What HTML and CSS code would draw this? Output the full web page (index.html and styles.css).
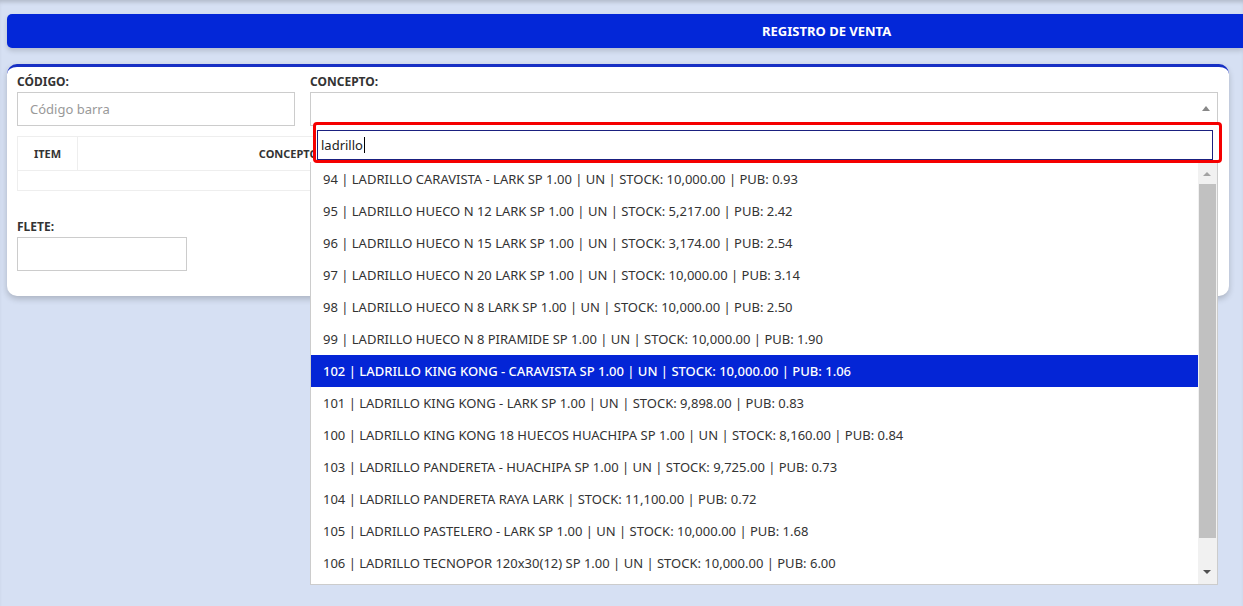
FILE: index.html
```html
<!DOCTYPE html>
<html lang="es">
<head>
    <meta charset="UTF-8">
    <meta name="viewport" content="width=device-width, initial-scale=1.0">
    <title>Registro de venta</title>
    <link rel="stylesheet" href="styles.css">
</head>
<body>

<div class="page">

    <!-- Title bar -->
    <div class="title-bar">REGISTRO DE VENTA</div>

    <!-- Main card -->
    <div class="card">
        <div class="top-row">
            <div class="field field-codigo">
                <label>CÓDIGO:</label>
                <input type="text" class="text-input" placeholder="Código barra">
            </div>
            <div class="field field-concepto">
                <label>CONCEPTO:</label>
                <div class="select-box"><span class="select-arrow"></span></div>

                <!-- Open dropdown of the select -->
                <div class="dropdown">
                    <div class="search-focus">
                        <div class="search-input">ladrillo<span class="caret"></span></div>
                    </div>
                    <div class="results">
                        <ul class="options">
                            <li>94 | LADRILLO CARAVISTA - LARK SP 1.00 | UN | STOCK: 10,000.00 | PUB: 0.93</li>
                            <li>95 | LADRILLO HUECO N 12 LARK SP 1.00 | UN | STOCK: 5,217.00 | PUB: 2.42</li>
                            <li>96 | LADRILLO HUECO N 15 LARK SP 1.00 | UN | STOCK: 3,174.00 | PUB: 2.54</li>
                            <li>97 | LADRILLO HUECO N 20 LARK SP 1.00 | UN | STOCK: 10,000.00 | PUB: 3.14</li>
                            <li>98 | LADRILLO HUECO N 8 LARK SP 1.00 | UN | STOCK: 10,000.00 | PUB: 2.50</li>
                            <li>99 | LADRILLO HUECO N 8 PIRAMIDE SP 1.00 | UN | STOCK: 10,000.00 | PUB: 1.90</li>
                            <li class="selected">102 | LADRILLO KING KONG - CARAVISTA SP 1.00 | UN | STOCK: 10,000.00 | PUB: 1.06</li>
                            <li>101 | LADRILLO KING KONG - LARK SP 1.00 | UN | STOCK: 9,898.00 | PUB: 0.83</li>
                            <li>100 | LADRILLO KING KONG 18 HUECOS HUACHIPA SP 1.00 | UN | STOCK: 8,160.00 | PUB: 0.84</li>
                            <li>103 | LADRILLO PANDERETA - HUACHIPA SP 1.00 | UN | STOCK: 9,725.00 | PUB: 0.73</li>
                            <li>104 | LADRILLO PANDERETA RAYA LARK | STOCK: 11,100.00 | PUB: 0.72</li>
                            <li>105 | LADRILLO PASTELERO - LARK SP 1.00 | UN | STOCK: 10,000.00 | PUB: 1.68</li>
                            <li>106 | LADRILLO TECNOPOR 120x30(12) SP 1.00 | UN | STOCK: 10,000.00 | PUB: 6.00</li>
                        </ul>
                        <div class="scrollbar">
                            <span class="arrow-up"></span>
                            <div class="thumb"></div>
                            <span class="arrow-down"></span>
                        </div>
                    </div>
                </div>
            </div>
        </div>

        <table class="items-table">
            <thead>
                <tr>
                    <th class="col-item">ITEM</th>
                    <th class="col-concepto">CONCEPTO</th>
                    <th>CANTIDAD</th>
                    <th>PRECIO</th>
                    <th>TOTAL</th>
                </tr>
            </thead>
            <tbody>
                <tr><td colspan="5"></td></tr>
            </tbody>
        </table>

        <div class="field field-flete">
            <label>FLETE:</label>
            <input type="text" class="text-input">
        </div>
    </div>

</div>

</body>
</html>
```

FILE: styles.css
```css
* {
    box-sizing: border-box;
}
body {
    margin: 0;
    background-color: #d6e0f3;
    font-family: "Noto Sans", Arial, sans-serif;
    color: #333;
    overflow: hidden;
}
.page {
    min-height: 100vh;
    padding: 14px 0 0 7px;
    box-shadow: inset 0 4px 4px -2px rgba(0, 0, 0, 0.18);
}
.title-bar {
    height: 34px;
    line-height: 34px;
    padding-left: 755px;
    background-color: #0327d8;
    color: #fff;
    font-size: 13px;
    font-weight: bold;
    border-radius: 5px 0 0 5px;
    box-shadow: 0 3px 5px rgba(0, 0, 0, 0.15);
}
.card {
    width: 1222px;
    margin-top: 16px;
    padding: 6px 11px 25px 10px;
    background-color: #fff;
    border-top: 3px solid #1730c4;
    border-radius: 10px;
    box-shadow: 0 3px 6px rgba(0, 0, 0, 0.2);
}
.top-row {
    display: flex;
    gap: 15px;
}
.field label {
    display: block;
    height: 18px;
    line-height: 18px;
    margin-bottom: 1px;
    font-size: 12px;
    font-weight: bold;
    color: #333;
}
.field-codigo {
    width: 278px;
}
.field-concepto {
    position: relative;
    width: 908px;
}
.text-input {
    display: block;
    width: 100%;
    height: 34px;
    padding: 0 12px;
    border: 1px solid #ccc;
    font-family: inherit;
    font-size: 13px;
    color: #333;
    outline: none;
}
.text-input::placeholder {
    color: #999;
}
.select-box {
    position: relative;
    height: 34px;
    border: 1px solid #ccc;
}
.select-arrow {
    position: absolute;
    right: 7px;
    top: 13px;
    border-left: 4px solid transparent;
    border-right: 4px solid transparent;
    border-bottom: 5px solid #888;
}

/* dropdown */
.dropdown {
    position: absolute;
    top: 49px;
    left: 0;
    width: 908px;
    z-index: 10;
}
.search-focus {
    position: relative;
    width: 909px;
    height: 41px;
    margin-left: 3px;
    margin-bottom: -1px;
    padding: 5px 6px 0 1px;
    border: 3px solid #f50000;
    border-radius: 4px;
    background-color: #fff;
    z-index: 2;
}
.search-input {
    height: 30px;
    line-height: 28px;
    padding-left: 3px;
    border: 1px solid #1a2080;
    font-size: 13px;
    color: #222;
}
.caret {
    display: inline-block;
    width: 1px;
    height: 16px;
    margin-left: 1px;
    vertical-align: -3px;
    background-color: #000;
}
.results {
    display: flex;
    height: 423px;
    border: 1px solid #ccc;
    border-top: none;
    background-color: #fff;
}
.options {
    flex: 1;
    margin: 0;
    padding: 1px 0 0;
    list-style: none;
}
.options li {
    height: 32px;
    line-height: 32px;
    padding-left: 12px;
    font-size: 13px;
    color: #333;
    white-space: nowrap;
}
.options li.selected {
    background-color: #0425d6;
    color: #fff;
    font-weight: 500;
}
.scrollbar {
    position: relative;
    width: 19px;
    background-color: #f1f1f1;
}
.scrollbar .thumb {
    position: absolute;
    left: 1px;
    right: 1px;
    top: 22px;
    height: 354px;
    background-color: #c1c1c1;
}
.arrow-up,
.arrow-down {
    position: absolute;
    left: 5px;
    border-left: 4px solid transparent;
    border-right: 4px solid transparent;
}
.arrow-up {
    top: 10px;
    border-bottom: 4px solid #a3a3a3;
}
.arrow-down {
    bottom: 10px;
    border-top: 4px solid #505050;
}

/* table */
.items-table {
    width: 100%;
    margin-top: 10px;
    border-collapse: collapse;
}
.items-table th {
    height: 34px;
    border: 1px solid #eee;
    font-size: 11px;
    font-weight: bold;
    color: #333;
}
.items-table .col-item {
    width: 60px;
}
.items-table .col-concepto {
    width: 422px;
}
.items-table td {
    height: 20px;
    border: 1px solid #eee;
}
.field-flete {
    width: 170px;
    margin-top: 27px;
}
```
